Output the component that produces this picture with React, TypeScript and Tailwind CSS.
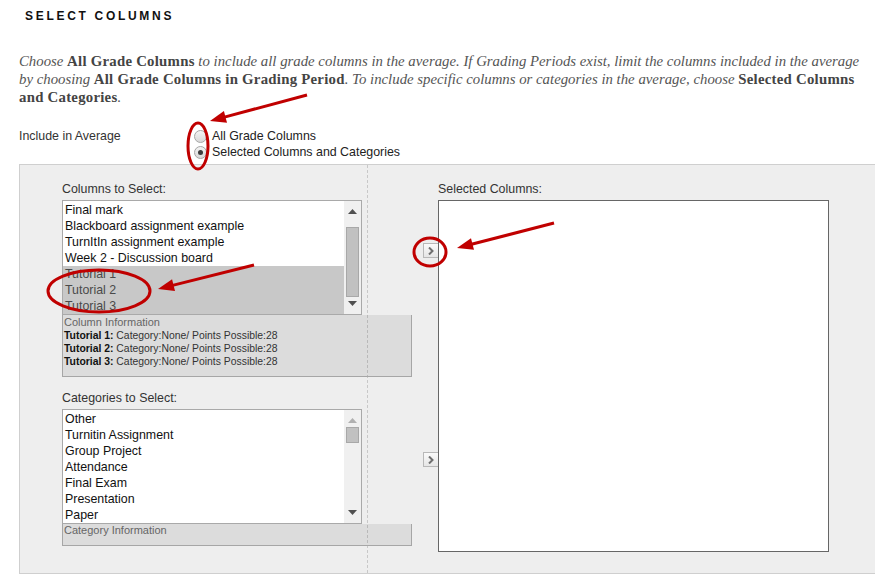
import React from 'react';

const columnItems = [
  'Final mark',
  'Blackboard assignment example',
  'TurnItIn assignment example',
  'Week 2 - Discussion board',
  'Tutorial 1',
  'Tutorial 2',
  'Tutorial 3',
];

const categoryItems = [
  'Other',
  'Turnitin Assignment',
  'Group Project',
  'Attendance',
  'Final Exam',
  'Presentation',
  'Paper',
];

const selectedColumns = ['Tutorial 1', 'Tutorial 2', 'Tutorial 3'];

function Triangle({ up, color }: { up?: boolean; color: string }) {
  return (
    <svg width="9" height="5" viewBox="0 0 9 5" className="block">
      <polygon points={up ? '0,5 9,5 4.5,0' : '0,0 9,0 4.5,5'} fill={color} />
    </svg>
  );
}

interface ListBoxProps {
  items: string[];
  selected?: string[];
  thumbClass: string;
  upColor: string;
}

function ListBox({ items, selected = [], thumbClass, upColor }: ListBoxProps) {
  return (
    <div className="flex h-[115px] w-[300px] border border-[#a9a9a9] bg-white">
      <div className="flex-1 overflow-hidden pt-px">
        {items.map((item) => {
          const isSel = selected.includes(item);
          return (
            <div
              key={item}
              className={
                isSel
                  ? 'h-4 whitespace-nowrap bg-[#c8c8c8] pl-[2px] leading-4 text-[#4a4a4a]'
                  : 'h-4 whitespace-nowrap pl-[2px] leading-4 text-[#111]'
              }
            >
              {item}
            </div>
          );
        })}
      </div>
      {/* scrollbar */}
      <div className="relative flex w-[17px] flex-col items-center justify-between bg-[#f0f0f0] py-[8px]">
        <Triangle up color={upColor} />
        <Triangle color="#505050" />
        <div className={`absolute left-[2px] w-[13px] border border-[#a8a8a8] bg-[#c1c1c1] ${thumbClass}`} />
      </div>
    </div>
  );
}

function Radio({ checked }: { checked?: boolean }) {
  return (
    <span className="ml-px mr-[5px] flex h-[13px] w-[13px] items-center justify-center rounded-full border border-[#a6a6a6] bg-gradient-to-b from-[#f4f4f4] to-[#d8d8d8]">
      {checked && <span className="h-[5px] w-[5px] rounded-full bg-[#3c3c3c]" />}
    </span>
  );
}

function MoveButton() {
  return (
    <div className="flex h-[15px] w-[15px] items-center justify-center border border-r-0 border-[#b8b8b8] bg-gradient-to-b from-[#fafafa] to-[#e6e6e6]">
      <svg width="6" height="8" viewBox="0 0 6 8">
        <path d="M1 0.5 L4.5 4 L1 7.5" stroke="#707070" strokeWidth="2" fill="none" />
      </svg>
    </div>
  );
}

function Arrow({ x1, y1, x2, y2 }: { x1: number; y1: number; x2: number; y2: number }) {
  const dx = x2 - x1;
  const dy = y2 - y1;
  const len = Math.hypot(dx, dy);
  const ux = dx / len;
  const uy = dy / len;
  const head = 16;
  const half = 6;
  const bx = x2 - ux * head;
  const by = y2 - uy * head;
  const p1 = `${bx - uy * half},${by + ux * half}`;
  const p2 = `${bx + uy * half},${by - ux * half}`;
  return (
    <g>
      <line x1={x1} y1={y1} x2={bx + ux * 2} y2={by + uy * 2} stroke="#c00000" strokeWidth="3" />
      <polygon points={`${x2},${y2} ${p1} ${p2}`} fill="#c00000" />
    </g>
  );
}

export default function App() {
  return (
    <div
      className="relative h-[584px] w-[875px] overflow-hidden bg-white text-[12.4px] text-[#333]"
      style={{ fontFamily: '"Liberation Sans", Arial, sans-serif' }}
    >
      <div className="pl-[19px]">
        {/* Heading */}
        <h2 className="ml-[6px] pt-2 text-[12px] font-bold leading-4 tracking-[2.7px] text-[#111]">
          SELECT COLUMNS
        </h2>

        {/* Instructions */}
        <p
          className="mt-[28px] whitespace-nowrap text-[14.8px] italic leading-[18px] text-[#555]"
          style={{ fontFamily: '"Liberation Serif", "Times New Roman", serif' }}
        >
          <span className="block">
            Choose <b className="not-italic tracking-[0.25px] text-[#444]">All Grade Columns</b> to include all grade
            columns in the average. If Grading Periods exist, limit the columns included in the average
          </span>
          <span className="block">
            by choosing <b className="not-italic tracking-[0.25px] text-[#444]">All Grade Columns in Grading Period</b>.
            To include specific columns or categories in the average, choose{' '}
            <b className="not-italic tracking-[0.25px] text-[#444]">Selected Columns</b>
          </span>
          <span className="block">
            <b className="not-italic tracking-[0.25px] text-[#444]">and Categories</b>.
          </span>
        </p>

        {/* Include in Average */}
        <div className="mt-[21px] flex">
          <div className="w-[174px] pt-px leading-4">Include in Average</div>
          <div className="pt-px text-[#222]">
            <label className="flex h-4 items-center leading-4">
              <Radio />
              All Grade Columns
            </label>
            <label className="flex h-4 items-center leading-4">
              <Radio checked />
              Selected Columns and Categories
            </label>
          </div>
        </div>

        {/* Column selection panel */}
        <div className="mt-[4px] flex h-[410px] border-y border-l border-[#cfcfcf] bg-[#eeeeee]">
          {/* left side */}
          <div className="w-[348px] shrink-0 border-r border-dashed border-[#c8c8c8] pl-[42px] pt-4">
            <div className="mb-[3px] leading-4">Columns to Select:</div>
            <ListBox items={columnItems} selected={selectedColumns} thumbClass="top-[26px] h-[70px]" upColor="#505050" />
            <div className="h-[62px] w-[350px] border border-t-0 border-[#a6a6a6] bg-[#00000013] px-px pt-[1px]">
              <div className="text-[11px] leading-[13px] text-[#666]">Column Information</div>
              <div className="text-[10.4px] leading-[13px] text-[#333]">
                {selectedColumns.map((c) => (
                  <div key={c}>
                    <b className="text-[#111]">{c}:</b> Category:None/ Points Possible:28
                  </div>
                ))}
              </div>
            </div>

            <div className="mb-[3px] mt-[13px] leading-4">Categories to Select:</div>
            <ListBox items={categoryItems} thumbClass="top-[17px] h-[16px]" upColor="#b0b0b0" />
            <div className="h-[22px] w-[350px] border border-t-0 border-[#a6a6a6] bg-[#00000013] px-px">
              <div className="text-[11px] leading-[13px] text-[#666]">Category Information</div>
            </div>
          </div>

          {/* right side */}
          <div className="ml-[55px] flex">
            <div className="flex w-[15px] flex-col pt-[78px]">
              <MoveButton />
              <div className="h-[194px]" />
              <MoveButton />
            </div>
            <div className="pt-4">
              <div className="mb-[3px] leading-4">Selected Columns:</div>
              <div className="h-[352px] w-[391px] border border-[#666] bg-white" />
            </div>
          </div>
        </div>
      </div>

      {/* red annotations */}
      <svg
        className="pointer-events-none absolute left-0 top-0"
        width="875"
        height="584"
        viewBox="0 0 875 584"
      >
        <Arrow x1={307} y1={95} x2={210} y2={121} />
        <ellipse cx={198} cy={146} rx={10} ry={23} fill="none" stroke="#c00000" strokeWidth="3" />
        <Arrow x1={254} y1={265} x2={158} y2={289} />
        <ellipse cx={99} cy={291} rx={51} ry={21} fill="none" stroke="#c00000" strokeWidth="3" />
        <Arrow x1={554} y1={223} x2={457} y2={248} />
        <ellipse cx={430} cy={252} rx={16} ry={14} fill="none" stroke="#c00000" strokeWidth="3" />
      </svg>
    </div>
  );
}
